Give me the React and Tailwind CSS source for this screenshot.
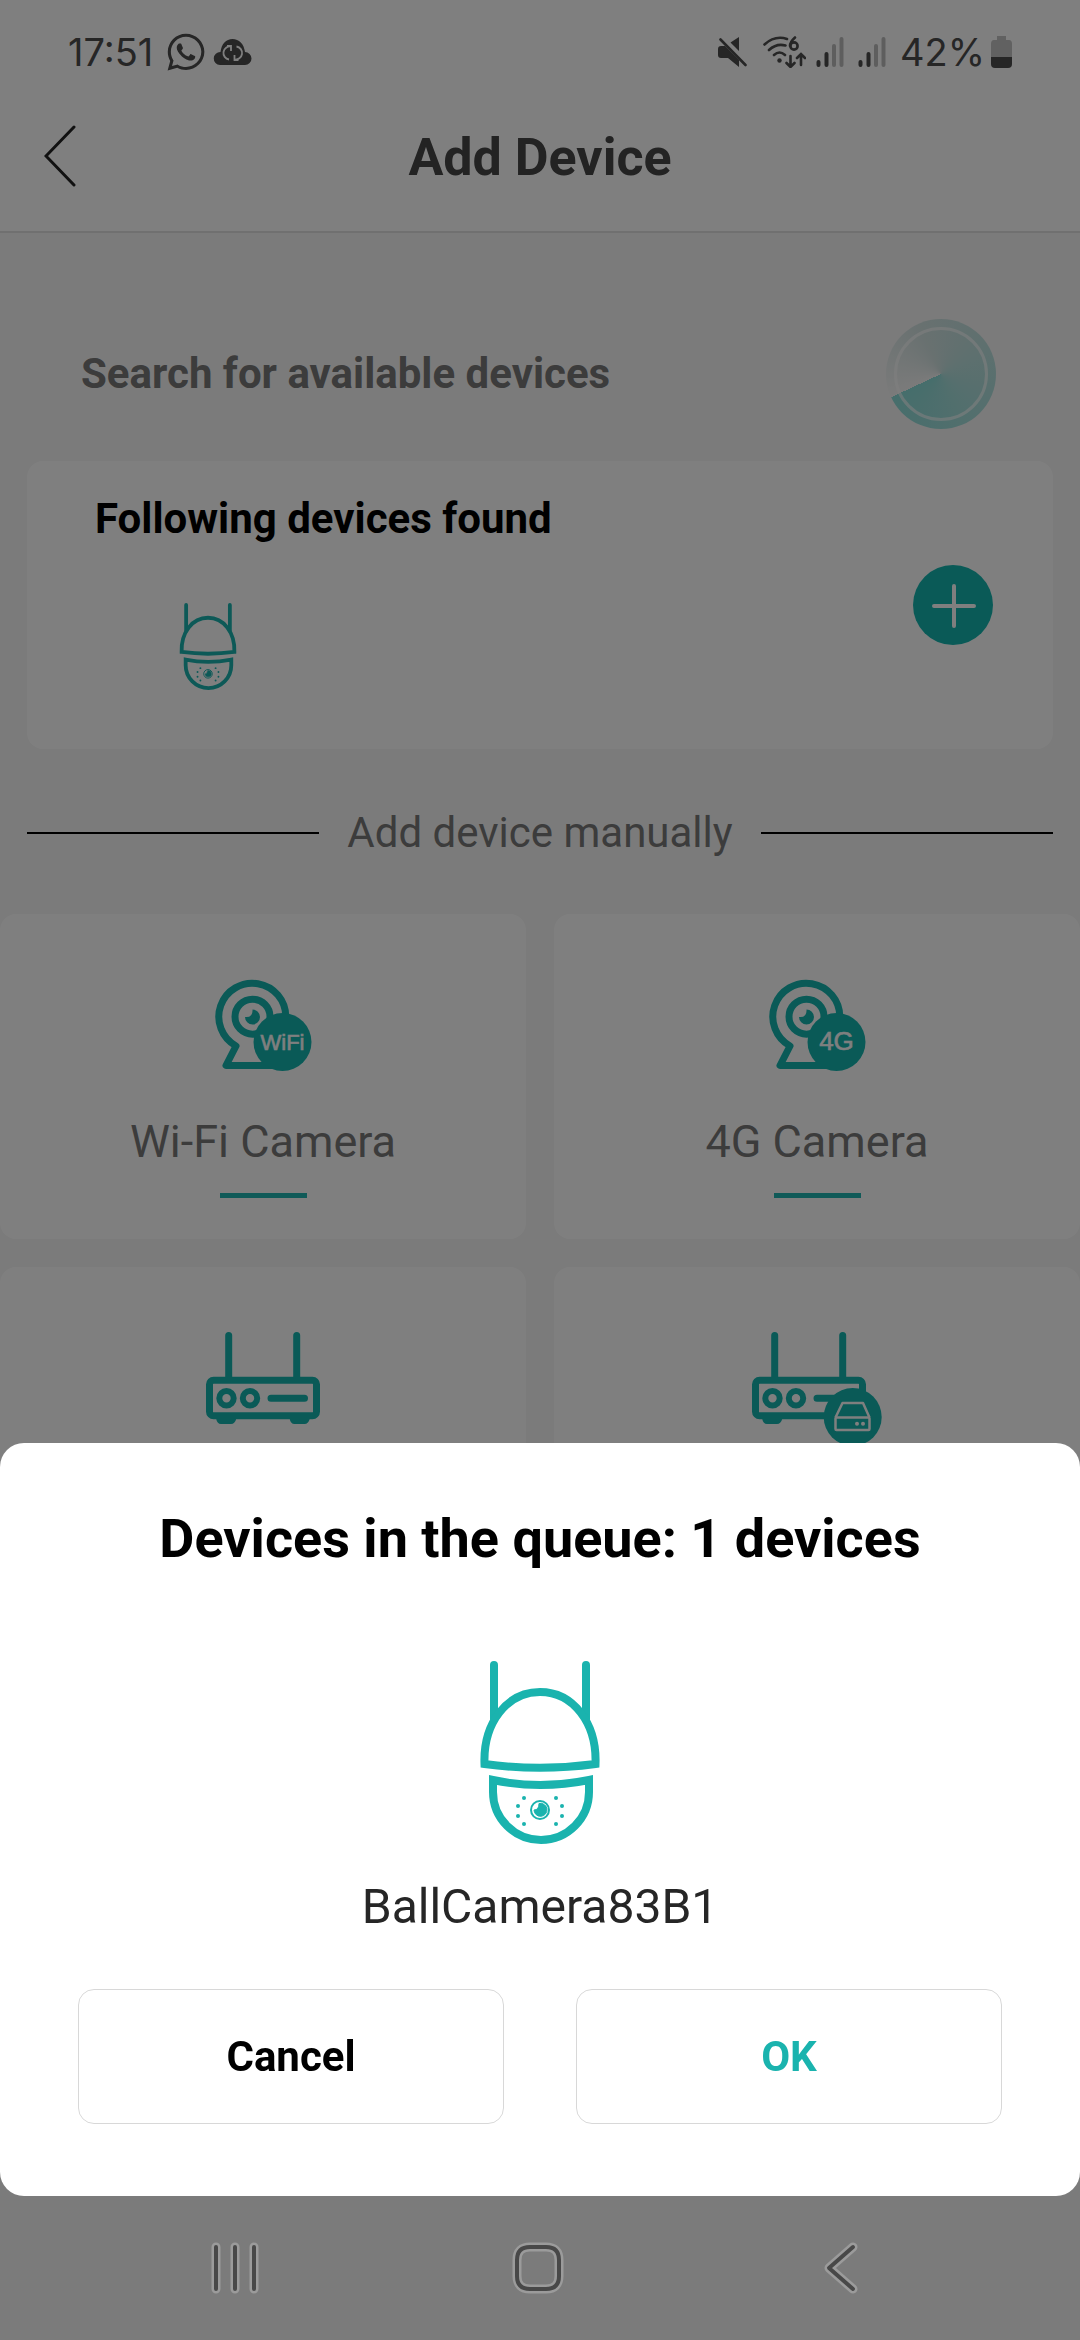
import { FaWhatsapp } from "react-icons/fa";

const BallCamera = ({ className }) => (
  <svg viewBox="0 0 120 183" className={className} fill="none" stroke="#1ab3ae" strokeWidth="8" aria-hidden="true">
    <path d="M14 4V58M106 4V58" strokeLinecap="round" />
    <path d="M4.500 103C3 62 27 31 60 31S117 62 115.500 103Q60 110.500 4.500 103Z" />
    <path d="M13 119Q60 129 109 119V131A48 48 0 0 1 13 131Z" />
    <circle cx="60" cy="149" r="9" strokeWidth="2" />
    <path
      d="M59 142.500A6.500 6.500 0 1 1 54 149Q59 149 59 142.500Z"
      fill="#1ab3ae"
      strokeWidth="1"
    />
    <g fill="#1ab3ae" stroke="none">
      <circle cx="44" cy="137" r="2" />
      <circle cx="38" cy="145" r="2" />
      <circle cx="38" cy="155" r="2" />
      <circle cx="44" cy="163" r="2" />
      <circle cx="76" cy="137" r="2" />
      <circle cx="82" cy="145" r="2" />
      <circle cx="82" cy="155" r="2" />
      <circle cx="76" cy="163" r="2" />
    </g>
  </svg>
);

const BadgeCamera = ({ badge, badgeSize }) => (
  <svg viewBox="0 0 97 93" className="h-[93px] w-[97px]" fill="none" stroke="#14b5af" strokeWidth="7" aria-hidden="true">
    <path d="M70.800 37.700A33.500 33.500 0 1 0 21 67L11 86.500H62" strokeLinecap="round" strokeLinejoin="round" />
    <circle cx="37.500" cy="37.700" r="17.500" />
    <path d="M37.500 30.500A7.500 7.500 0 1 1 30 38Q38 39 37.500 30.500Z" fill="#14b5af" stroke="none" />
    <circle cx="67.500" cy="63" r="29" fill="#14b5af" stroke="none" />
    <text
      x="67.500"
      y="71"
      textAnchor="middle"
      fill="#fff"
      stroke="#fff"
      strokeWidth="0.600"
      fontSize={badgeSize}
      fontFamily="Liberation Sans, sans-serif"
    >
      {badge}
    </text>
  </svg>
);

const routerShapes = (
  <>
    <path d="M22.700 3.500V47M90.700 3.500V47M65 66.300H98.500" strokeLinecap="round" />
    <rect x="3.500" y="48.200" width="107" height="35.500" rx="4" />
    <circle cx="20.500" cy="66.300" r="7.200" strokeWidth="6" />
    <circle cx="44" cy="66.300" r="7.200" strokeWidth="6" />
    <path d="M10 86H30.500Q29 92 25 92H15Q11 92 10 86ZM83.500 86H104Q102.500 92 98.500 92H88.500Q84.500 92 83.500 86Z" fill="#14b5af" stroke="none" />
  </>
);

const Router = () => (
  <svg viewBox="0 0 114 92" className="h-[92px] w-[114px]" fill="none" stroke="#14b5af" strokeWidth="7" aria-hidden="true">
    {routerShapes}
  </svg>
);

const Recorder = () => (
  <svg viewBox="0 0 130 114" className="h-[114px] w-[130px]" fill="none" stroke="#14b5af" strokeWidth="7" aria-hidden="true">
    {routerShapes}
    <circle cx="100.700" cy="85" r="29" fill="#14b5af" stroke="none" />
    <g stroke="#fff" strokeWidth="2.500" strokeLinejoin="round">
      <path d="M83.500 85.500L90.500 71H111L117.500 85.500" />
      <rect x="83.500" y="85.500" width="34" height="12.500" rx="1" />
    </g>
    <circle cx="105" cy="91.700" r="2" fill="#fff" stroke="none" />
    <circle cx="111" cy="91.700" r="2" fill="#fff" stroke="none" />
  </svg>
);

const CloudSync = () => (
  <svg viewBox="0 0 39 26" className="h-[26px] w-[39px]" aria-hidden="true">
    <path
      d="M7 26A6.500 6.500 0 0 1 7.500 13C8.500 5 13 0 19.500 0S31 5 32 13A6.500 6.500 0 0 1 32 26Z"
      fill="#4c4c4c"
    />
    <g fill="none" stroke="#fff" strokeWidth="1.800">
      <path d="M18 7.500A6.500 6.500 0 0 0 16 20.500M21.500 20.500A6.500 6.500 0 0 0 23.500 7.500" />
      <path d="M14 7H18V12M25.500 21H21.500V16" />
    </g>
  </svg>
);

const Muted = () => (
  <svg viewBox="0 0 29 30" className="h-[30px] w-[29px]" fill="#4c4c4c" aria-hidden="true">
    <path d="M3 9H7L21 23V30L10 21H3Q0 21 0 18V12Q0 9 3 9ZM21 0V14L12.500 5.500Z" />
    <path d="M2.500 2.500L27.500 28" stroke="#4c4c4c" strokeWidth="2.600" strokeLinecap="round" />
  </svg>
);

const WifiSix = () => (
  <svg viewBox="0 0 43 32" className="h-[32px] w-[43px]" fill="none" stroke="#4c4c4c" strokeWidth="2.600" strokeLinecap="round" aria-hidden="true">
    <path d="M1.500 8.500Q12 -1 24 3M6 14Q13.500 7 22.500 9.500M11 19Q16.500 14 22 19" />
    <circle cx="16.500" cy="24.500" r="2.200" fill="#4c4c4c" stroke="none" />
    <path d="M32 1.500Q27 6 27 10" />
    <circle cx="31" cy="10" r="3.600" />
    <path d="M27.500 20V30.500M23.500 27L27.500 31L31.500 27M38 29V19M34 22L38 18L42 22" />
  </svg>
);

const Signal = () => (
  <svg viewBox="0 0 28 30" className="h-[30px] w-[28px]" strokeWidth="4" strokeLinecap="round" aria-hidden="true">
    <path d="M2.500 25V28M10.500 17V28" stroke="#4c4c4c" />
    <path d="M18 9V28M25.500 2V28" stroke="#bdbdbd" />
  </svg>
);

const Battery = () => (
  <svg viewBox="0 0 21 32" className="h-[32px] w-[21px]" aria-hidden="true">
    <path d="M6 0H15V4H18Q21 4 21 8V21H0V8Q0 4 3 4H6Z" fill="#c2c2c2" />
    <path d="M0 21H21V28Q21 32 17 32H4Q0 32 0 28Z" fill="#4c4c4c" />
  </svg>
);

const StatusBar = () => (
  <div className="flex h-[84px] items-end justify-between px-[68px] pb-[10px] font-[Inter,sans-serif] text-[38px] leading-[44px] text-[#4c4c4c]">
    <div className="flex items-center">
      <span>17:51</span>
      <FaWhatsapp className="ml-[12px] size-[42px]" />
      <span className="ml-[6px]">
        <CloudSync />
      </span>
    </div>
    <div className="flex items-center">
      <Muted />
      <span className="mr-[10px] ml-[16px]">
        <WifiSix />
      </span>
      <Signal />
      <span className="mr-[14px] ml-[14px]">
        <Signal />
      </span>
      <span className="mr-[6px]">42%</span>
      <Battery />
    </div>
  </div>
);

const deviceTypes = [
  { id: "wifi", label: "Wi-Fi Camera", icon: <BadgeCamera badge="WiFi" badgeSize="22" /> },
  { id: "4g", label: "4G Camera", icon: <BadgeCamera badge="4G" badgeSize="26" /> },
  { id: "router", icon: <Router /> },
  { id: "recorder", icon: <Recorder /> },
];

const DeviceTypeCard = ({ label, icon }) => (
  <button
    type="button"
    className="flex h-[325px] flex-col items-center rounded-[16px] bg-white pt-[65px] text-[45px] leading-[54px] text-[#787878]"
  >
    <span className="flex h-[136px] items-start">{icon}</span>
    {label && (
      <>
        <span>{label}</span>
        <span className="mt-[24px] h-[5px] w-[87px] bg-[#20b4b0]" />
      </>
    )}
  </button>
);

const QueueDialog = () => (
  <section role="dialog" aria-labelledby="queue-title" className="flex flex-col items-center rounded-[24px] bg-white px-[78px] pt-[64px] pb-[72px]">
    <h2 id="queue-title" className="text-[54px] leading-[64px] font-bold text-black">
      Devices in the queue: 1 devices
    </h2>
    <BallCamera className="mt-[90px] h-[183px] w-[120px]" />
    <p className="mt-[34px] text-[48px] leading-[58px] text-[#262626]">BallCamera83B1</p>
    <div className="mt-[53px] grid w-full grid-cols-2 gap-[72px] text-[42px] leading-[50px] font-bold">
      <button type="button" className="h-[135px] rounded-[16px] border border-[#d8d8d8] text-black">
        Cancel
      </button>
      <button type="button" className="h-[135px] rounded-[16px] border border-[#d8d8d8] text-[#1ab3ae]">
        OK
      </button>
    </div>
  </section>
);

// Each glyph is stroked twice so it keeps a light rim on any background
const NavGlyph = ({ d }) => (
  <svg viewBox="0 0 52 52" className="size-[52px]" fill="none" strokeLinecap="round" strokeLinejoin="round" aria-hidden="true">
    <path d={d} stroke="#9b9b9b" strokeWidth="9" />
    <path d={d} stroke="#484848" strokeWidth="4" />
  </svg>
);

const SystemNav = () => (
  <nav className="grid h-[144px] grid-cols-3 place-items-center pr-[88px] pl-[84px]">
    <button type="button" aria-label="Recents">
      <NavGlyph d="M7 5V47M26 5V47M45 5V47" />
    </button>
    <button type="button" aria-label="Home">
      <NavGlyph d="M18 5H34Q47 5 47 18V34Q47 47 34 47H18Q5 47 5 34V18Q5 5 18 5Z" />
    </button>
    <button type="button" aria-label="Back">
      <NavGlyph d="M38 5L14 26L38 47" />
    </button>
  </nav>
);

export default function App() {
  return (
    <div className="h-screen overflow-hidden bg-[#f6f6f6] font-[Roboto,sans-serif]">
      <header className="border-b-2 border-[#e0e0e0] bg-white">
        <StatusBar />
        <div className="grid h-[147px] grid-cols-[1fr_auto_1fr] items-center px-[44px]">
          <button type="button" aria-label="Back" className="justify-self-start">
            <svg viewBox="0 0 32 66" className="h-[66px] w-[32px]" fill="none" stroke="#222" strokeWidth="3" strokeLinecap="round" aria-hidden="true">
              <path d="M30 2L2 31L30 60" />
            </svg>
          </button>
          <h1 className="text-[52px] leading-[62px] font-bold text-[#464646]">Add Device</h1>
        </div>
      </header>

      <main>
        <div className="flex items-center justify-between pt-[86px] pr-[84px] pb-[32px] pl-[81px]">
          <p className="text-[42px] leading-[50px] font-bold text-[#787878]">Search for available devices</p>
          <div className="size-[110px] rounded-full bg-[conic-gradient(from_245deg,#f6f6f6,#d2e2e1_25%,#8cdcd8)] p-[8px]">
            <div className="size-full rounded-full border-3 border-white/60" />
          </div>
        </div>

        <section className="mx-[27px] h-[288px] rounded-[16px] bg-white pt-[33px] pr-[60px] pl-[68px]">
          <h2 className="text-[42px] leading-[50px] font-bold text-black">Following devices found</h2>
          <div className="mt-[21px] flex items-start justify-between pl-[84px]">
            <BallCamera className="mt-[38px] h-[87px] w-[58px]" />
            <button type="button" aria-label="Add" className="rounded-full bg-[#14b5af]">
              <svg viewBox="0 0 80 80" className="size-[80px]" stroke="#fff" strokeWidth="4" strokeLinecap="round" aria-hidden="true">
                <path d="M41 21V61M21 41H61" />
              </svg>
            </button>
          </div>
        </section>

        <div className="mx-[27px] mt-[59px] mb-[56px] flex items-center gap-[28px]">
          <span className="h-[2px] flex-1 bg-black" />
          <h2 className="text-[42px] leading-[50px] text-[#787878]">Add device manually</h2>
          <span className="h-[2px] flex-1 bg-black" />
        </div>

        <div className="grid grid-cols-2 gap-[28px]">
          {deviceTypes.map((type) => (
            <DeviceTypeCard key={type.id} label={type.label} icon={type.icon} />
          ))}
        </div>
      </main>

      <div className="fixed inset-0 flex flex-col justify-end bg-black/50">
        <QueueDialog />
        <SystemNav />
      </div>
    </div>
  );
}
